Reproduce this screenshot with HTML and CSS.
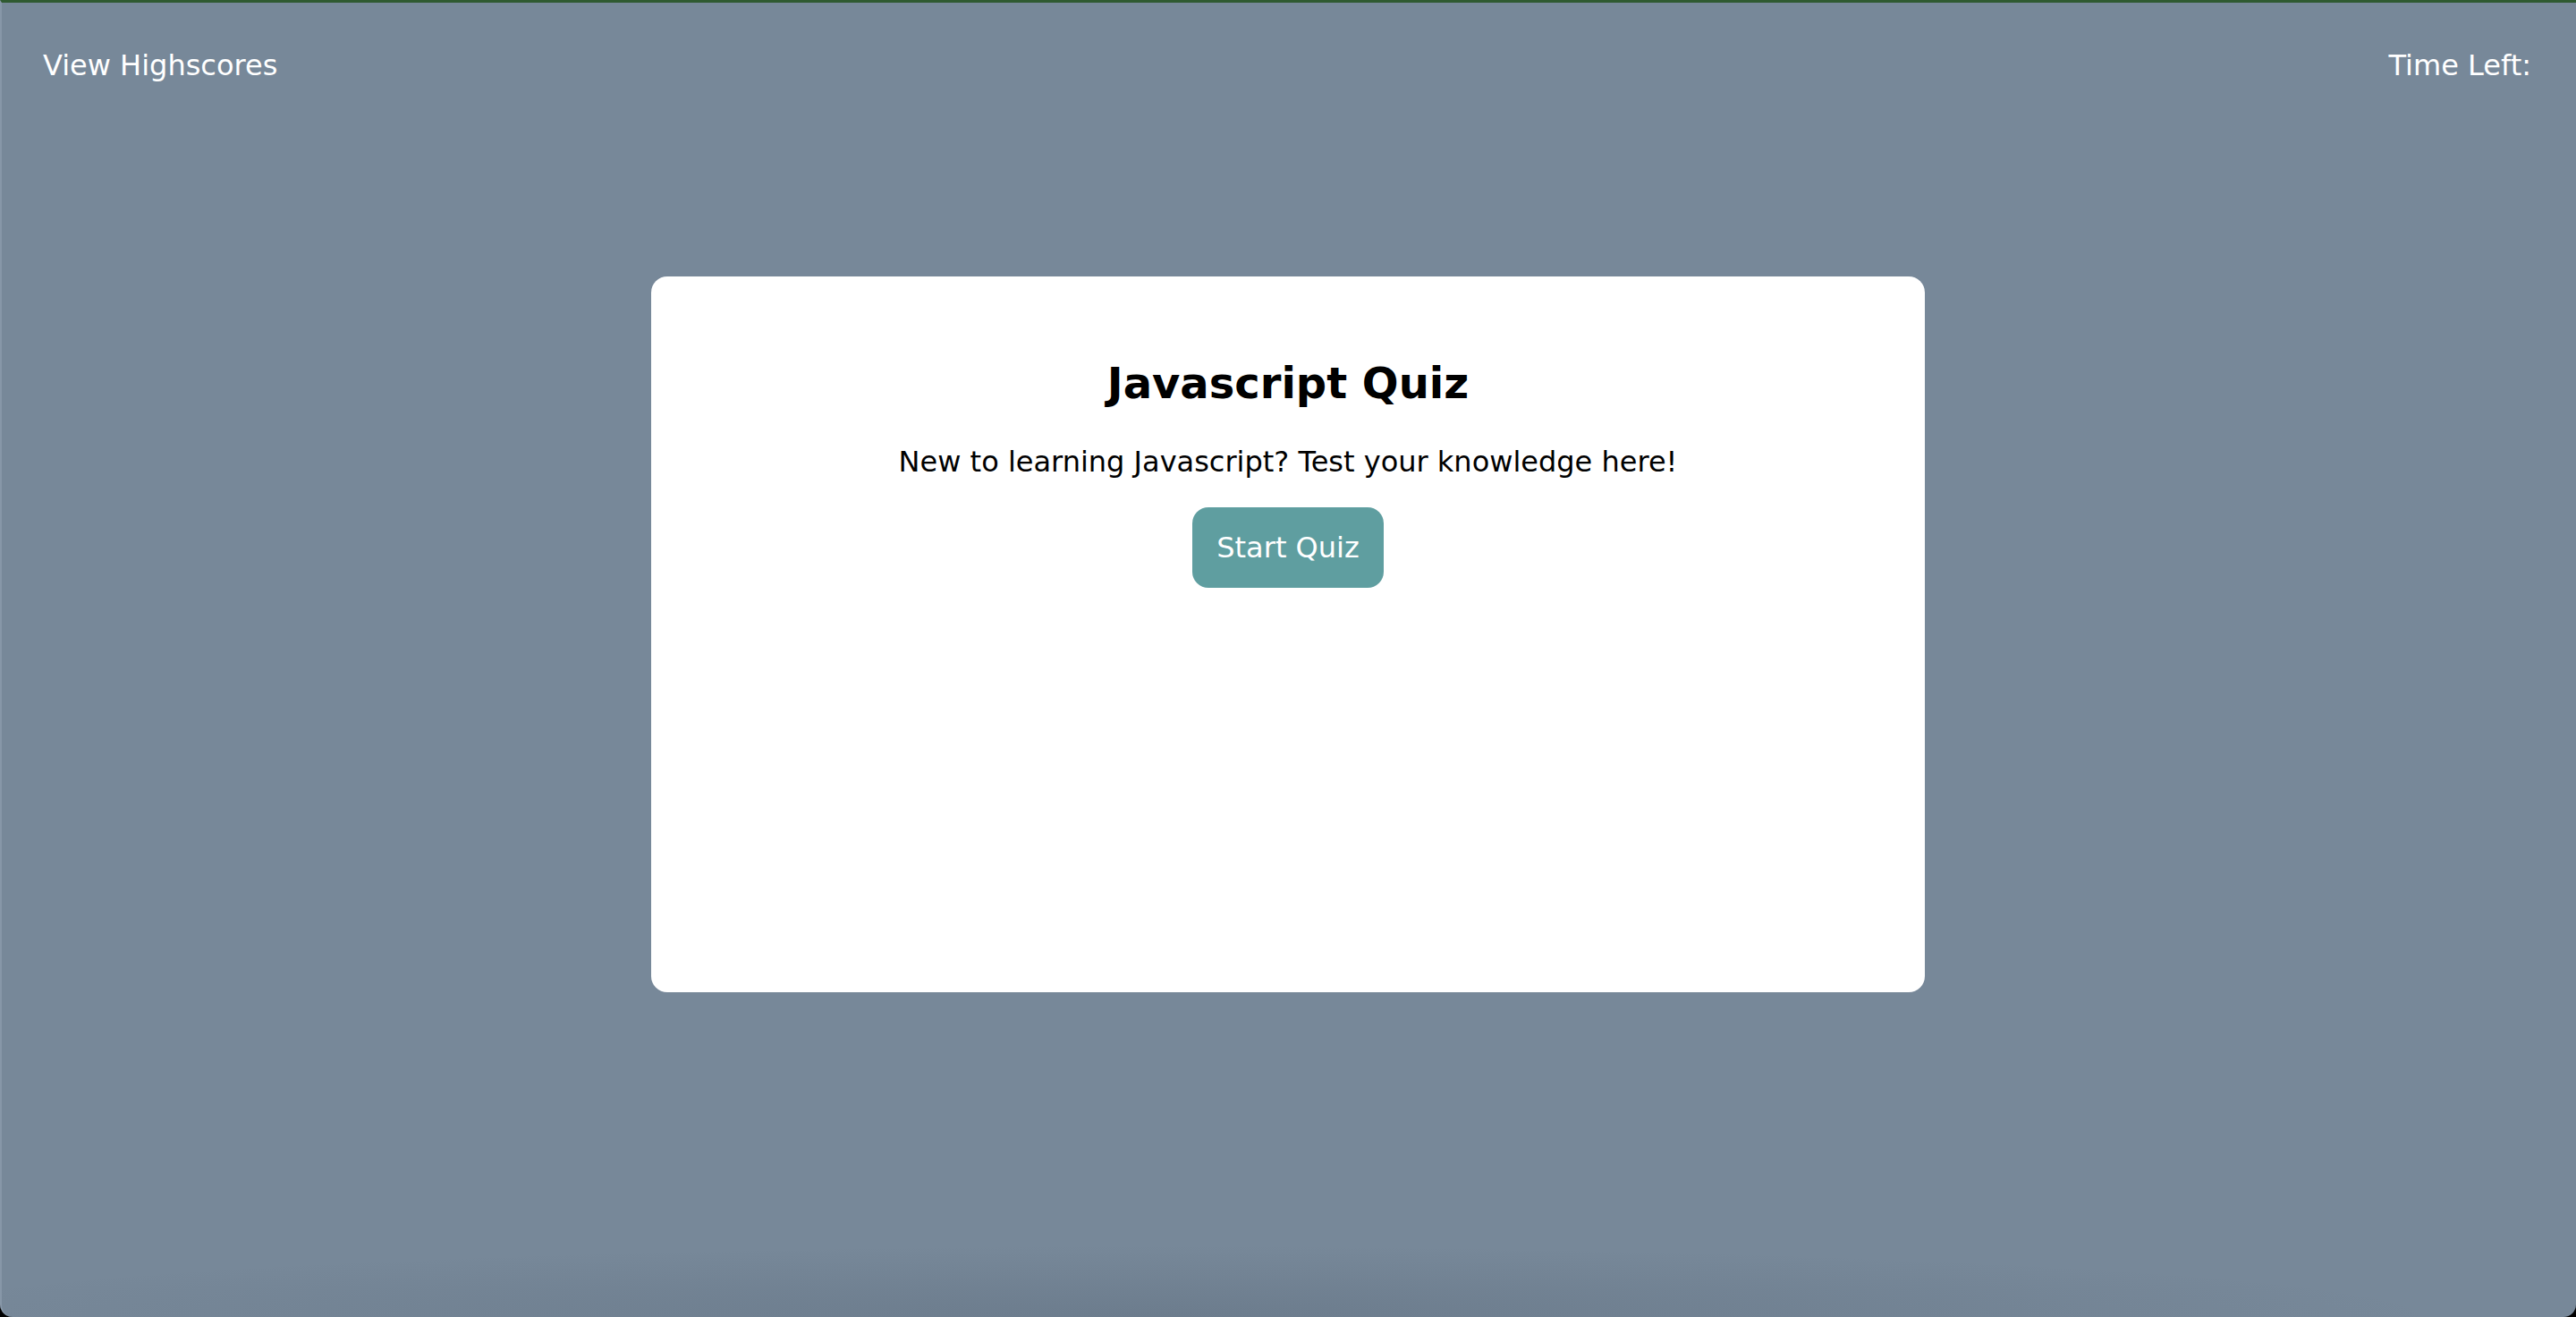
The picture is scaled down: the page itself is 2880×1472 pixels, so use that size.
FILE: index.html
```html
<!DOCTYPE html>
<html lang="en">
<head>
<meta charset="utf-8">
<title>Javascript Quiz</title>
<link rel="stylesheet" href="styles.css">
</head>
<body>
<div class="window">
  <header class="topbar">
    <a class="highscores" href="#">View Highscores</a>
    <span class="timer">Time Left:</span>
  </header>
  <main class="stage">
    <section class="card">
      <h1 class="title">Javascript Quiz</h1>
      <p class="intro">New to learning Javascript? Test your knowledge here!</p>
      <button class="start" type="button">Start Quiz</button>
    </section>
  </main>
</div>
</body>
</html>
```
FILE: styles.css
```css
html {
  background: #000;
}
body {
  margin: 0;
  font-family: "DejaVu Sans", Verdana, sans-serif;
}
.window {
  height: 1472px;
  box-sizing: border-box;
  border-top: 3px solid #2f5a31;
  border-left: 2px solid #8797a8;
  border-radius: 0 0 14px 14px;
  background:
    radial-gradient(ellipse 50% 80px at 45% 100%, rgba(50, 62, 78, 0.16), rgba(50, 62, 78, 0)),
    #778899;
  overflow: hidden;
}
.topbar {
  display: flex;
  justify-content: space-between;
  padding: 51px 50px 0 46px;
  font-size: 32px;
  color: #fff;
}
.highscores {
  color: #fff;
  text-decoration: none;
}
.stage {
  display: flex;
  justify-content: center;
  padding-top: 217px;
  padding-right: 2px;
}
.card {
  width: 1424px;
  height: 800px;
  box-sizing: border-box;
  padding-top: 91px;
  background: #fff;
  border-radius: 18px;
  display: flex;
  flex-direction: column;
  align-items: center;
  text-align: center;
}
.title {
  margin: 0 0 41px;
  font-size: 48px;
  font-weight: bold;
  color: #000;
}
.intro {
  margin: 0 0 32px;
  font-size: 32px;
  color: #000;
}
.start {
  font-family: "DejaVu Sans", Verdana, sans-serif;
  font-size: 32px;
  line-height: 38px;
  color: #fff;
  background: #5f9ea0;
  border: none;
  border-radius: 18px;
  padding: 26px 27px;
  width: 214px;
}
```
